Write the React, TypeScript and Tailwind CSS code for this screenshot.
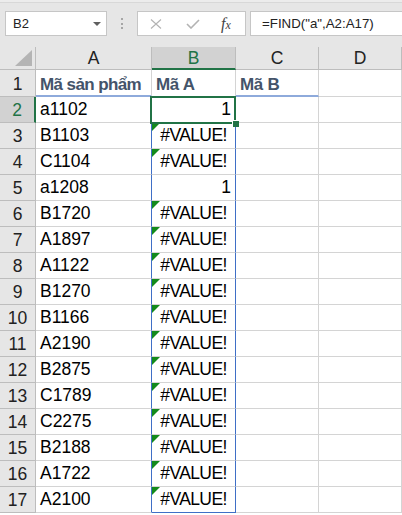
import React from "react";

const data: [string, string][] = [
  ["a1102", "1"],
  ["B1103", "#VALUE!"],
  ["C1104", "#VALUE!"],
  ["a1208", "1"],
  ["B1720", "#VALUE!"],
  ["A1897", "#VALUE!"],
  ["A1122", "#VALUE!"],
  ["B1270", "#VALUE!"],
  ["B1166", "#VALUE!"],
  ["A2190", "#VALUE!"],
  ["B2875", "#VALUE!"],
  ["C1789", "#VALUE!"],
  ["C2275", "#VALUE!"],
  ["B2188", "#VALUE!"],
  ["A1722", "#VALUE!"],
  ["A2100", "#VALUE!"],
];

const font = { fontFamily: '"Liberation Sans", Arial, sans-serif' };

function FormulaBar() {
  return (
    <div className="h-[47px] bg-[#e6e6e6] flex flex-col">
      <div className="h-[3px] bg-[#ececec] border-b border-[#d8d8d8]" />
      <div className="flex items-start pt-[8px] pl-[5px]">
        {/* Name box */}
        <div className="w-[102px] h-[25px] bg-white border border-[#c6c6c6] flex items-center justify-between pl-[7px] pr-[5px] text-[13px] text-[#222]">
          <span>B2</span>
          <span className="w-0 h-0 border-l-[4px] border-r-[4px] border-t-[4px] border-l-transparent border-r-transparent border-t-[#5f5f5f]" />
        </div>
        {/* dots */}
        <div className="w-[30px] h-[25px] flex flex-col items-center justify-center gap-[2.5px]">
          <span className="w-[2px] h-[2px] bg-[#a6a6a6]" />
          <span className="w-[2px] h-[2px] bg-[#a6a6a6]" />
          <span className="w-[2px] h-[2px] bg-[#a6a6a6]" />
        </div>
        {/* cancel / enter / fx */}
        <div className="w-[109px] h-[25px] bg-white border border-[#c6c6c6] flex items-center pl-[12px]">
          <svg width="12" height="10" viewBox="0 0 12 10" className="mr-[24px]">
            <path d="M1 0.5 L11 9.5 M11 0.5 L1 9.5" stroke="#b3b3b3" strokeWidth="1.1" fill="none" />
          </svg>
          <svg width="14" height="10" viewBox="0 0 14 10" className="mr-[21px]">
            <path d="M1 5 L5 9 L13 1" stroke="#b3b3b3" strokeWidth="1.6" fill="none" />
          </svg>
          <span
            className="italic text-[16px] text-[#444] leading-none"
            style={{ fontFamily: '"Liberation Serif", "Times New Roman", serif' }}
          >
            f<span className="text-[12px]">x</span>
          </span>
        </div>
        {/* formula */}
        <div className="ml-[4px] flex-1 h-[25px] bg-white border-y border-l border-[#c6c6c6] flex items-center pl-[11px] text-[13.3px] text-[#222]">
          =FIND("a",A2:A17)
        </div>
      </div>
    </div>
  );
}

function ErrorFlag() {
  return (
    <span className="absolute left-0 top-0 w-0 h-0 border-t-[8px] border-r-[8px] border-t-[#138a1c] border-r-transparent" />
  );
}

export default function App() {
  return (
    <div className="w-[402px] h-[515px] overflow-hidden bg-white text-black" style={font}>
      <FormulaBar />

      <div className="grid grid-cols-[36px_116px_84px_83px_83px] text-[17.5px] leading-none">
        {/* column headers */}
        <div className="h-[23px] bg-[#e6e6e6] border-r border-b border-[#bdbdbd] flex items-end justify-end p-[3px]">
          <svg width="17" height="16" viewBox="0 0 17 16">
            <polygon points="17,0 17,16 0,16" fill="#b4b4b4" />
          </svg>
        </div>
        <div className="h-[23px] bg-[#e6e6e6] border-r border-b border-[#bdbdbd] flex items-center justify-center pt-[2px] text-[#222]">
          A
        </div>
        <div className="h-[23px] bg-[#d2d2d2] border-r border-[#bdbdbd] border-b-2 border-b-[#217346] flex items-center justify-center pt-[3px] text-[#217346]">
          B
        </div>
        <div className="h-[23px] bg-[#e6e6e6] border-r border-b border-[#bdbdbd] flex items-center justify-center pt-[2px] text-[#222]">
          C
        </div>
        <div className="h-[23px] bg-[#e6e6e6] border-r border-b border-[#bdbdbd] flex items-center justify-center pt-[2px] text-[#222]">
          D
        </div>

        {/* row 1 */}
        <div className="h-[27px] bg-[#e6e6e6] border-r border-b border-[#bdbdbd] flex items-center justify-center pt-[3px] text-[#222]">
          1
        </div>
        <div className="h-[27px] border-r border-[#d4d4d4] border-b-2 border-b-[#8eaadb] flex items-center pl-[4px] pt-[3px] font-bold text-[17px] text-[#44546a] tracking-[-0.6px] whitespace-nowrap">
          Mã sản phẩm
        </div>
        <div className="h-[27px] border-r border-b border-[#d4d4d4] flex items-center pl-[4px] pt-[3px] font-bold text-[17px] text-[#44546a] tracking-[-0.3px]">
          Mã A
        </div>
        <div className="h-[27px] border-r border-[#d4d4d4] border-b-2 border-b-[#8eaadb] flex items-center pl-[4px] pt-[3px] font-bold text-[17px] text-[#44546a] tracking-[-0.3px]">
          Mã B
        </div>
        <div className="h-[27px] border-r border-b border-[#d4d4d4]" />

        {data.map(([a, b], i) => {
          const row = i + 2;
          const selected = row === 2;
          const last = row === 17;
          const isError = b.startsWith("#");
          return (
            <React.Fragment key={row}>
              <div
                className={
                  selected
                    ? "h-[26px] bg-[#d2d2d2] border-b border-[#bdbdbd] border-r-2 border-r-[#217346] flex items-center justify-center pt-[2px] text-[#217346]"
                    : "h-[26px] bg-[#e6e6e6] border-r border-b border-[#bdbdbd] flex items-center justify-center pt-[2px] text-[#222]"
                }
              >
                {row}
              </div>
              <div className="h-[26px] border-b border-[#d4d4d4] border-r border-r-[#3f6fc6] flex items-center pl-[4px] pt-[1px]">
                {a}
              </div>
              <div
                className={
                  "relative h-[26px] border-r border-r-[#3f6fc6] flex items-center pt-[1px] " +
                  (last ? "border-b border-b-[#3f6fc6] " : "border-b border-[#d4d4d4] ") +
                  (isError ? "justify-center tracking-[-0.6px]" : "justify-end pr-[4px]")
                }
              >
                {isError && <ErrorFlag />}
                {b}
                {selected && (
                  <>
                    <span className="absolute -left-[2px] -top-px -right-px -bottom-[2px] border-2 border-[#217346] z-10" />
                    <span className="absolute -right-[4px] -bottom-[5px] w-[7px] h-[7px] bg-[#217346] border-l border-t border-white z-20" />
                  </>
                )}
              </div>
              <div className="h-[26px] border-r border-b border-[#d4d4d4]" />
              <div className="h-[26px] border-r border-b border-[#d4d4d4]" />
            </React.Fragment>
          );
        })}
      </div>
    </div>
  );
}
